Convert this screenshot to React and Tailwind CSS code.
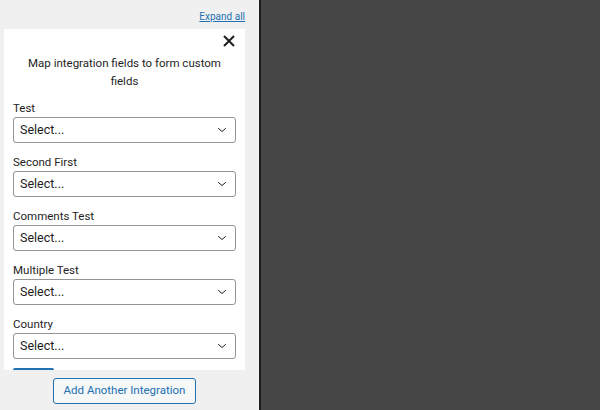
import React from "react";

const fields = ["Test", "Second First", "Comments Test", "Multiple Test", "Country"];

function Chevron() {
  return (
    <svg width="12" height="12" viewBox="0 0 24 24" fill="none" stroke="#1e1e1e" strokeWidth="2" strokeLinecap="round" strokeLinejoin="round">
      <path d="M5 9l7 6 7-6" />
    </svg>
  );
}

function SelectField({ label }) {
  return (
    <div className="flex flex-col">
      <label className="text-[11.5px] leading-[16px] text-[#1e1e1e] mb-[1px]">{label}</label>
      <div className="h-[26px] flex items-center justify-between border border-[#949494] rounded-[3px] bg-white pl-[6px] pr-[7px]">
        <span className="text-[12.5px] text-[#1e1e1e]">Select...</span>
        <Chevron />
      </div>
    </div>
  );
}

export default function App() {
  return (
    <div className="flex w-[600px] h-[410px] font-['Roboto',sans-serif]">
      <div className="w-[255px] bg-[#f0f0f0] flex flex-col pl-[4px] border-r-2 border-[#1e1e1e] box-content">
        <div className="w-[241px] h-[29px] flex items-center justify-end pt-[4px]">
          <a className="text-[10px] text-[#2271b1] underline">Expand all</a>
        </div>
        <div className="w-[241px] h-[341px] bg-white overflow-hidden px-[9px] pt-[6px]">
          <div className="flex justify-end pr-[1px]">
            <svg width="12" height="12" viewBox="0 0 12 12" stroke="#1e1e1e" strokeWidth="2">
              <path d="M1 1l10 10M11 1L1 11" />
            </svg>
          </div>
          <p className="text-center text-[11.5px] leading-[18px] text-[#1e1e1e] mt-[7px] px-[8px]">
            Map integration fields to form custom fields
          </p>
          <div className="flex flex-col gap-[11px] mt-[10px]">
            {fields.map((f) => (
              <SelectField key={f} label={f} />
            ))}
          </div>
          <div className="mt-[9px] w-[41px] h-[30px] bg-[#2271b1] rounded-[2px]" />
        </div>
        <div className="w-[241px] flex justify-center pt-[8px]">
          <button className="h-[26px] px-[10px] text-[11.5px] text-[#2271b1] border border-[#2271b1] rounded-[3px] bg-[#f6f7f7]">
            Add Another Integration
          </button>
        </div>
      </div>
      <div className="flex-1 bg-[#464646]" />
    </div>
  );
}
